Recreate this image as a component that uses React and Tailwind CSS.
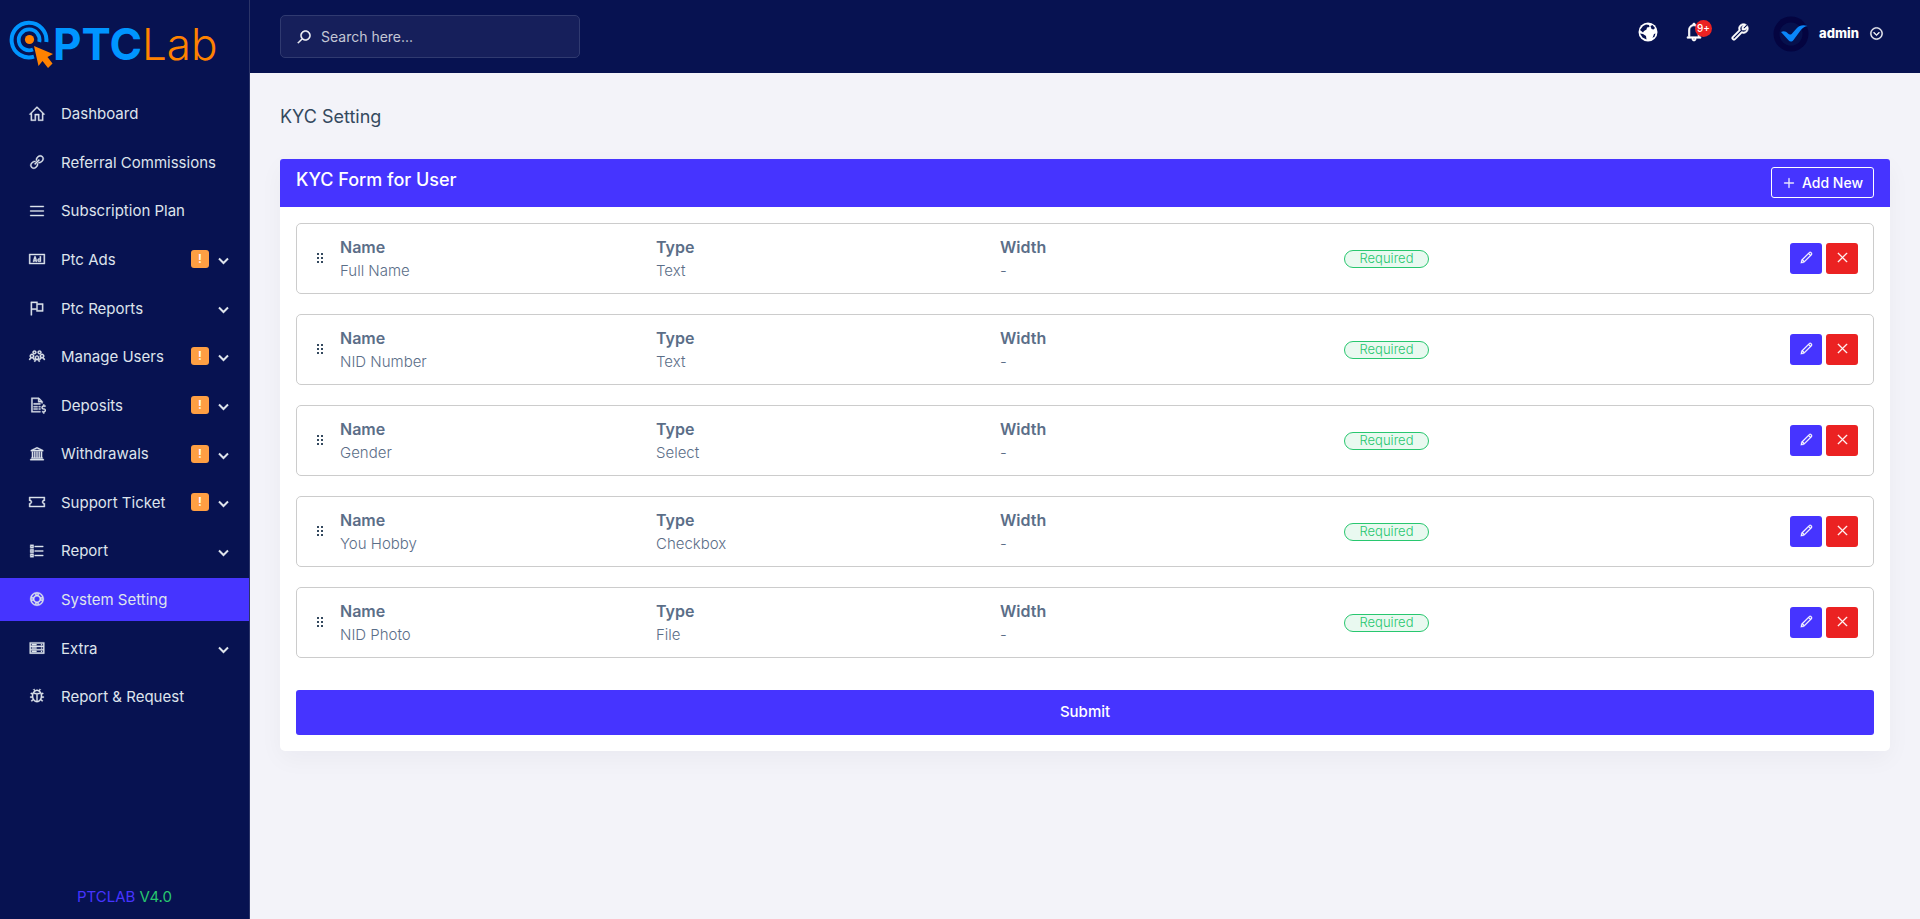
import { useState } from 'react';
import clsx from 'clsx';
import {
  LiaHomeSolid,
  LiaLinkSolid,
  LiaBarsSolid,
  LiaAdSolid,
  LiaFlag,
  LiaUsersSolid,
  LiaFileInvoiceDollarSolid,
  LiaUniversitySolid,
  LiaTicketAltSolid,
  LiaListSolid,
  LiaLifeRing,
  LiaServerSolid,
  LiaBugSolid,
  LiaSearchSolid,
  LiaBell,
  LiaWrenchSolid,
  LiaPlusSolid,
  LiaPenSolid,
  LiaTimesSolid,
  LiaChevronCircleDownSolid,
} from 'react-icons/lia';

const menuItems = [
  { label: 'Dashboard', icon: LiaHomeSolid },
  { label: 'Referral Commissions', icon: LiaLinkSolid },
  { label: 'Subscription Plan', icon: LiaBarsSolid },
  { label: 'Ptc Ads', icon: LiaAdSolid, alert: true, submenu: true },
  { label: 'Ptc Reports', icon: LiaFlag, submenu: true },
  { label: 'Manage Users', icon: LiaUsersSolid, alert: true, submenu: true },
  { label: 'Deposits', icon: LiaFileInvoiceDollarSolid, alert: true, submenu: true },
  { label: 'Withdrawals', icon: LiaUniversitySolid, alert: true, submenu: true },
  { label: 'Support Ticket', icon: LiaTicketAltSolid, alert: true, submenu: true },
  { label: 'Report', icon: LiaListSolid, submenu: true },
  { label: 'System Setting', icon: LiaLifeRing, active: true },
  { label: 'Extra', icon: LiaServerSolid, submenu: true },
  { label: 'Report & Request', icon: LiaBugSolid },
];

const initialFields = [
  { id: 1, name: 'Full Name', type: 'Text', width: '-' },
  { id: 2, name: 'NID Number', type: 'Text', width: '-' },
  { id: 3, name: 'Gender', type: 'Select', width: '-' },
  { id: 4, name: 'You Hobby', type: 'Checkbox', width: '-' },
  { id: 5, name: 'NID Photo', type: 'File', width: '-' },
];

function Logo() {
  return (
    <a href="#" className="flex items-center h-[73px] pl-[9px] pt-4">
      <svg width="44" height="50" viewBox="0 0 44 50" fill="none" className="shrink-0">
        <path d="M25 36.700A17.400 17.400 0 1 1 37.300 22" stroke="#0095ff" strokeWidth="4" />
        <path d="M24 29.500A10.400 10.400 0 1 1 30.300 22" stroke="#0095ff" strokeWidth="3.800" />
        <circle cx="20.500" cy="19.500" r="4.600" fill="#ff8200" />
        <path d="M25 26L44 34L38.500 37L43.500 43.500L39 48L33.500 41L29.500 46Z" fill="#ff8200" />
      </svg>
      <span className="flex items-center pb-[2px] text-[44px] leading-none">
        <span className="font-bold text-[#0095ff]">PTC</span>
        <span className="font-light text-[#ff8200]">Lab</span>
      </span>
    </a>
  );
}

function MenuItem({ item }) {
  const Icon = item.icon;

  return (
    <li>
      <a
        href="#"
        className={clsx(
          'flex items-center h-[43px] pl-7 pr-5 text-[#dee4ec]',
          item.active && 'bg-[#4634ff]'
        )}
      >
        <Icon className="w-[18px] h-[18px] mr-[15px] shrink-0 stroke-[0.7]" />
        <span className="flex-1 pt-[2px] text-[15px]">{item.label}</span>
        {item.alert && (
          <span className="flex items-center justify-center w-[18px] h-[18px] mr-[9px] rounded-[3px] bg-[#ff9f43] text-xs font-semibold text-white">
            !
          </span>
        )}
        {item.submenu && (
          <svg width="11" height="8" viewBox="0 0 11 8" fill="none" className="mt-1">
            <path d="M1 1.500l4.500 4.500L10 1.500" stroke="currentColor" strokeWidth="2" />
          </svg>
        )}
      </a>
    </li>
  );
}

function Sidebar() {
  return (
    <aside className="w-[250px] shrink-0 flex flex-col bg-[#071251] border-r border-[#2b3468]">
      <Logo />
      <nav className="pt-[19px]">
        <ul className="flex flex-col justify-between h-[626px]">
          {menuItems.map(item => (
            <MenuItem key={item.label} item={item} />
          ))}
        </ul>
      </nav>
      <p className="mt-auto pb-[11px] text-center text-[15px]">
        <span className="text-[#4634ff]">PTCLAB</span>{' '}
        <span className="text-[#28c76f]">V4.0</span>
      </p>
    </aside>
  );
}

function GlobeIcon() {
  return (
    <svg width="22" height="22" viewBox="0 0 22 22">
      <circle cx="11" cy="11" r="9.500" fill="#ffffff" />
      <path d="M3 9L6 5l3-1.500 3 .5.500 2-2.500.5-.5 2-2.500 1.500-1 1.500z" fill="#071251" />
      <path d="M13.500 5l2-1 2.500 3-1.500 1.500-2-.5z" fill="#071251" />
      <path d="M3 12.500l3 .5 3 2 .5 3.500-4-2z" fill="#071251" />
      <path d="M17 13l1.500-.5-1 3-2 1.500z" fill="#071251" />
    </svg>
  );
}

function Avatar() {
  return (
    <svg width="36" height="36" viewBox="0 0 36 36" className="shrink-0">
      <circle cx="18" cy="18" r="17.500" fill="#040440" />
      <circle cx="18" cy="18" r="11.500" fill="#06104c" />
      <path d="M8 16c3-1.500 5-.5 7 1.500 1.500 1.500 3 1.500 4.500-.5l4-4.500c3-3.500 7-4 11-2.500-3 .5-5 2-7 4.500l-7 9.500c-1.500 2-3.500 2-5 .3z" fill="#0a86f8" />
    </svg>
  );
}

function Topbar() {
  return (
    <header className="flex items-start justify-between h-[73px] pl-[30px] pr-9 bg-[#071251]">
      <div className="flex items-center w-[300px] h-[43px] mt-[15px] pl-[15px] rounded-[5px] border border-[#303a70] bg-[#161f5b]">
        <label htmlFor="search">
          <LiaSearchSolid className="w-4 h-4 text-white stroke-1" />
        </label>
        <input
          id="search"
          type="search"
          aria-label="Search"
          placeholder="Search here..."
          className="flex-1 min-w-0 px-[9px] bg-transparent text-sm text-white placeholder:text-[#c4c7d5] outline-none"
        />
      </div>

      <div className="flex items-center h-16 text-white">
        <button type="button" aria-label="Visit website" className="mr-6">
          <GlobeIcon />
        </button>
        <button type="button" aria-label="Notifications" className="relative mr-6">
          <LiaBell className="w-[22px] h-[22px] stroke-1" />
          <span className="absolute -top-px left-3 flex items-center justify-center w-[17px] h-[17px] rounded-full bg-[#eb2222] text-[10px] font-medium">
            9+
          </span>
        </button>
        <button type="button" aria-label="System tools" className="mr-[22px]">
          <LiaWrenchSolid className="w-[22px] h-[22px] stroke-1" />
        </button>
        <button type="button" className="flex items-center pt-[3px]">
          <Avatar />
          <span className="mx-[10px] text-[13px] font-extrabold">admin</span>
          <LiaChevronCircleDownSolid className="w-[15px] h-[15px] stroke-1" />
        </button>
      </div>
    </header>
  );
}

function GripIcon() {
  return (
    <svg width="7" height="11" viewBox="0 0 7 11" fill="#34495e" className="shrink-0">
      <path d="M1 0h2v2H1zM5 0h2v2H5zM1 4h2v2H1zM5 4h2v2H5zM1 8h2v2H1zM5 8h2v2H5z" />
    </svg>
  );
}

function FieldRow({ field, onDelete }) {
  return (
    <li className="flex items-center h-[71px] pl-[19px] pr-[15px] rounded-[5px] border border-[#cccccc]">
      <GripIcon />
      <div className="flex-1 grid grid-cols-[316fr_344fr_344fr_514fr] items-center ml-[17px]">
        <div>
          <p className="font-semibold">Name</p>
          <p className="text-[15px] leading-6 font-light">{field.name}</p>
        </div>
        <div>
          <p className="font-semibold">Type</p>
          <p className="text-[15px] leading-6 font-light">{field.type}</p>
        </div>
        <div>
          <p className="font-semibold">Width</p>
          <p className="text-[15px] leading-6 font-light">{field.width}</p>
        </div>
        <div className="flex items-center justify-between">
          <span className="flex items-center justify-center w-[85px] h-[18px] rounded-full border border-[#28c76f] bg-[#e9f9f0] text-[13px] font-light text-[#28c76f]">
            Required
          </span>
          <div className="flex gap-1 text-white">
            <button
              type="button"
              aria-label={`Edit ${field.name}`}
              className="flex items-center justify-center w-8 h-[31px] pb-[2px] rounded-[3px] bg-[#4634ff]"
            >
              <LiaPenSolid className="w-[15px] h-[15px] stroke-[0.7]" />
            </button>
            <button
              type="button"
              aria-label={`Delete ${field.name}`}
              onClick={() => onDelete(field.id)}
              className="flex items-center justify-center w-8 h-[31px] pb-[2px] rounded-[3px] bg-[#eb2222]"
            >
              <LiaTimesSolid className="w-[15px] h-[15px] stroke-[0.7]" />
            </button>
          </div>
        </div>
      </div>
    </li>
  );
}

export default function App() {
  const [fields, setFields] = useState(initialFields);

  const handleDelete = (id) => {
    setFields(prev => prev.filter(field => field.id !== id));
  };

  const handleSubmit = (e) => {
    e.preventDefault();
  };

  return (
    <div className="flex min-h-screen bg-[#f3f3f9] font-['Inter',sans-serif] text-[#5b6e88]">
      <Sidebar />

      <div className="flex-1 min-w-0">
        <Topbar />

        <main className="px-[30px] pt-[30px]">
          <h1 className="text-lg leading-7 text-[#34495e]">KYC Setting</h1>

          <form
            onSubmit={handleSubmit}
            className="mt-7 rounded-[5px] bg-white shadow-[0_8px_24px_rgba(18,38,63,0.04)]"
          >
            {/* Card header */}
            <div className="flex items-start justify-between h-12 px-4 pt-2 rounded-t-[3px] bg-[#4634ff] text-white">
              <h2 className="text-lg leading-[26px] font-medium">KYC Form for User</h2>
              <button
                type="button"
                className="flex items-center justify-center gap-[6px] w-[103px] h-[31px] rounded-[3px] border border-white text-sm font-medium"
              >
                <LiaPlusSolid className="w-[14px] h-[14px] stroke-[0.7]" />
                Add New
              </button>
            </div>

            {/* Form fields */}
            <div className="p-4">
              <ul className="flex flex-col gap-5">
                {fields.map(field => (
                  <FieldRow key={field.id} field={field} onDelete={handleDelete} />
                ))}
              </ul>
              <button
                type="submit"
                className="w-full h-[45px] mt-8 rounded-[3px] bg-[#4634ff] text-[15px] font-medium text-white"
              >
                Submit
              </button>
            </div>
          </form>
        </main>
      </div>
    </div>
  );
}
